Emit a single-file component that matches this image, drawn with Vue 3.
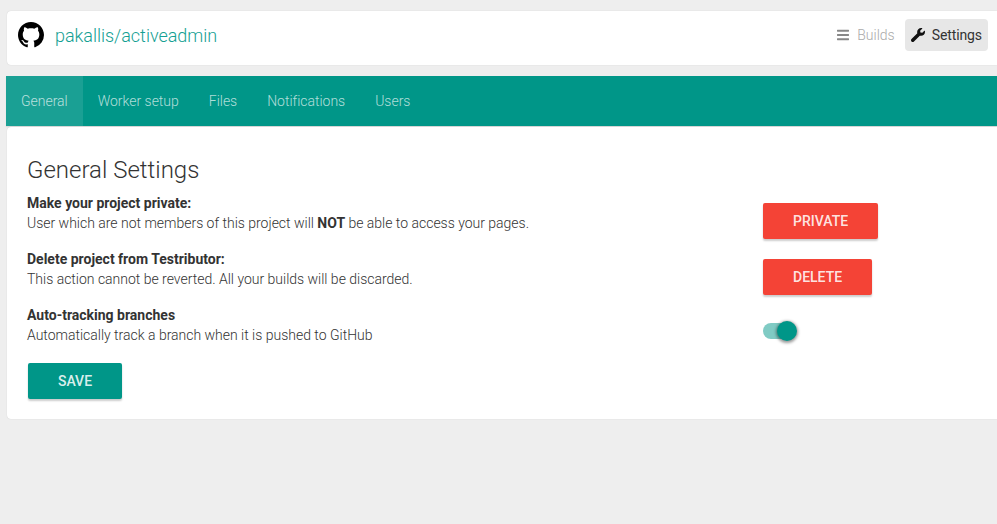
<script setup>
const tabs = ['General', 'Worker setup', 'Files', 'Notifications', 'Users']
</script>

<template>
  <div class="page">
    <header class="top card">
      <div class="brand">
        <svg class="gh" viewBox="0 0 16 16" width="26" height="26"><path fill="#000" d="M8 0C3.58 0 0 3.58 0 8c0 3.54 2.29 6.53 5.47 7.59.4.07.55-.17.55-.38 0-.19-.01-.82-.01-1.49-2.01.37-2.53-.49-2.69-.94-.09-.23-.48-.94-.82-1.13-.28-.15-.68-.52-.01-.53.63-.01 1.08.58 1.23.82.72 1.21 1.87.87 2.33.66.07-.52.28-.87.51-1.07-1.78-.2-3.64-.89-3.64-3.95 0-.87.31-1.59.82-2.15-.08-.2-.36-1.02.08-2.12 0 0 .67-.21 2.2.82.64-.18 1.32-.27 2-.27s1.36.09 2 .27c1.53-1.04 2.2-.82 2.2-.82.44 1.1.16 1.92.08 2.12.51.56.82 1.27.82 2.15 0 3.07-1.87 3.75-3.65 3.95.29.25.54.73.54 1.48 0 1.07-.01 1.93-.01 2.2 0 .21.15.46.55.38A8.01 8.01 0 0 0 16 8c0-4.42-3.58-8-8-8z"/></svg>
        <a class="repo">pakallis/activeadmin</a>
      </div>
      <nav class="actions">
        <a class="action">
          <svg viewBox="0 0 448 512" width="12" height="14"><path fill="currentColor" d="M16 132h416c8.800 0 16-7.200 16-16V76c0-8.800-7.200-16-16-16H16C7.200 60 0 67.200 0 76v40c0 8.800 7.200 16 16 16zm0 160h416c8.800 0 16-7.200 16-16v-40c0-8.800-7.200-16-16-16H16c-8.800 0-16 7.200-16 16v40c0 8.800 7.200 16 16 16zm0 160h416c8.800 0 16-7.200 16-16v-40c0-8.800-7.200-16-16-16H16c-8.800 0-16 7.200-16 16v40c0 8.800 7.200 16 16 16z"/></svg>
          Builds
        </a>
        <a class="action active">
          <svg viewBox="0 0 512 512" width="14" height="14"><path fill="currentColor" d="M507.730 109.100c-2.240-9.030-13.540-12.090-20.120-5.510l-74.360 74.360-67.880-11.310-11.310-67.880 74.360-74.360c6.620-6.620 3.430-17.900-5.660-20.160-47.380-11.740-99.550.91-136.580 37.930-39.640 39.640-50.550 97.100-34.050 147.200L18.740 402.760c-24.990 24.990-24.990 65.510 0 90.500 24.990 24.990 65.510 24.990 90.500 0l213.210-213.210c50.120 16.710 107.470 5.680 147.370-34.220 37.070-37.070 49.700-89.320 37.910-136.730z"/></svg>
          Settings
        </a>
      </nav>
    </header>

    <nav class="tabs">
      <a v-for="(t, i) in tabs" :key="t" class="tab" :class="{ on: i === 0 }">{{ t }}</a>
    </nav>

    <section class="panel card">
      <h1>General Settings</h1>
      <div class="row">
        <div class="text">
          <strong>Make your project private:</strong>
          <p>User which are not members of this project will <b>NOT</b> be able to access your pages.</p>
        </div>
        <div class="ctl"><button class="btn red">PRIVATE</button></div>
      </div>
      <div class="row">
        <div class="text">
          <strong>Delete project from Testributor:</strong>
          <p>This action cannot be reverted. All your builds will be discarded.</p>
        </div>
        <div class="ctl"><button class="btn red">DELETE</button></div>
      </div>
      <div class="row">
        <div class="text">
          <strong>Auto-tracking branches</strong>
          <p>Automatically track a branch when it is pushed to GitHub</p>
        </div>
        <div class="ctl"><span class="switch"><span class="knob"></span></span></div>
      </div>
      <button class="btn teal">SAVE</button>
    </section>
  </div>
</template>

<style>
html, body { margin: 0; background: #eeeeee; overflow: hidden; }
</style>

<style scoped>
.page {
  width: 997px;
  height: 524px;
  background: #eeeeee;
  font-family: Roboto, "Liberation Sans", sans-serif;
  font-size: 14px;
  color: #333;
  overflow: hidden;
  padding-top: 11px;
  box-sizing: border-box;
}
.card {
  background: #fff;
  border-radius: 4px 0 0 4px;
  box-shadow: 0 0 1px rgba(0, 0, 0, 0.2);
  margin-left: 7px;
}
.top {
  height: 54px;
  box-sizing: border-box;
  padding: 0 9px 6px 11px;
  display: flex;
  align-items: center;
  justify-content: space-between;
}
.brand { display: flex; align-items: center; gap: 11px; }
.gh { display: block; }
.repo { font-size: 18px; font-weight: 300; color: #14a093; letter-spacing: -0.03px; }
.actions { display: flex; align-items: center; gap: 4px; }
.action {
  display: flex;
  align-items: center;
  gap: 8px;
  height: 32px;
  padding: 0 6px;
  color: #aaa;
  font-weight: 300;
  border-radius: 4px;
}
.action svg { color: #888; }
.action.active { background: #e7e7e7; color: #333; font-weight: 400; gap: 7px; letter-spacing: -0.1px; }
.action.active svg { color: #111; }
.tabs {
  margin: 11px 0 0 6px;
  height: 50px;
  background: #009688;
  display: flex;
  box-shadow: 0 1px 1px rgba(0, 0, 0, 0.08);
}
.tab {
  padding: 0 15px;
  line-height: 50px;
  color: rgba(255, 255, 255, 0.7);
  font-weight: 300;
  letter-spacing: -0.02px;
}
.tab.on { background: rgba(255, 255, 255, 0.1); }
.panel {
  margin-top: 1px;
  height: 292px;
  box-sizing: border-box;
  padding: 29px 0 0 20px;
}
h1 { margin: 0 0 8px; font-size: 24px; line-height: 28px; font-weight: 300; color: #333; }
.row { display: flex; height: 56px; }
.text { width: 736px; line-height: 20px; padding-top: 1px; }
.text strong { font-weight: 700; display: block; }
.text p { margin: 0; font-weight: 300; color: #333; letter-spacing: -0.01px; }
.text b { font-weight: 700; }
.ctl { padding-top: 11px; }
.btn {
  display: block;
  height: 36px;
  padding: 0 30px;
  border: 0;
  border-radius: 2px;
  font-family: inherit;
  font-size: 14px;
  font-weight: 500;
  color: rgba(255, 255, 255, 0.87);
  box-shadow: 0 2px 2px rgba(0, 0, 0, 0.2);
}
.red { background: #f44336; }
.teal { background: #009688; margin: 3px 0 0 1px; width: 94px; padding: 0; }
.switch {
  display: block;
  position: relative;
  width: 33px;
  height: 16px;
  margin-top: 8px;
  background: #80cbc4;
  border-radius: 8px;
}
.knob {
  position: absolute;
  top: -2px;
  right: -1px;
  width: 20px;
  height: 20px;
  border-radius: 50%;
  background: #009688;
  box-shadow: 0 1px 3px 1px rgba(0, 0, 0, 0.4);
}
</style>
